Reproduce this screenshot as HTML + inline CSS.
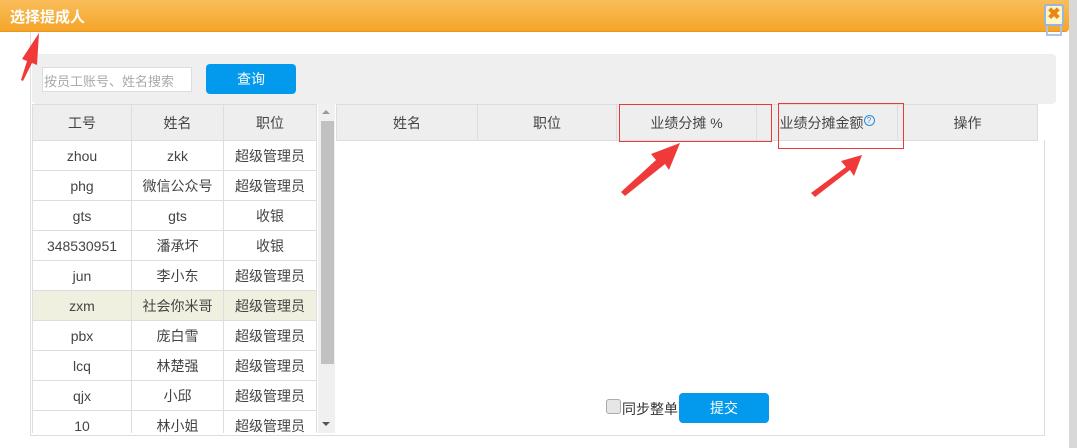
<!DOCTYPE html>
<html><head><meta charset="utf-8"><style>
*{margin:0;padding:0;box-sizing:border-box}
html,body{width:1077px;height:448px;overflow:hidden}
body{background:#fff;position:relative;font-family:"Liberation Sans","Noto Sans CJK SC",sans-serif;font-size:14px;color:#333}
.a{position:absolute}
.hd{left:0;top:0;width:1069px;height:32px;background:linear-gradient(#f9bd5a,#f5a52a);border-bottom:1px solid #e8961c;border-radius:0 0 4px 0}
.hd span{position:absolute;left:10px;top:6px;color:#fff;font-weight:bold;font-size:15px}
table{border-collapse:collapse;position:absolute}
td,th{border:1px solid #ddd;text-align:center;font-weight:normal;font-size:14px;color:#444}
th{background:#eee;height:36px}
td{height:30px}
</style></head><body>
<div class="a hd"><span>选择提成人</span></div>
<div class="a" style="left:1044px;top:4px;width:20px;height:22px;border:2px solid #9ab4e0;border-radius:3px;background:#fff6c8;color:#e8861a;font-weight:bold;font-size:16px;text-align:center;line-height:18px">✖</div>
<div class="a" style="left:1046px;top:26px;width:16px;height:10px;border:2px solid #a9c4f0;border-top:none"></div>
<div class="a" style="left:1069px;top:0;width:8px;height:448px;background:#d8d8d8"></div>
<div class="a" style="left:30px;top:32px;width:1px;height:404px;background:#ddd"></div>
<div class="a" style="left:30px;top:435px;width:1015px;height:1px;background:#ddd"></div>
<div class="a" style="left:1044px;top:140px;width:1px;height:296px;background:#ddd"></div>
<div class="a" style="left:32px;top:54px;width:1024px;height:50px;background:#efefef;border-radius:4px"></div>
<div class="a" style="left:42px;top:67px;width:150px;height:25px;background:#fff;border:1px solid #ddd;color:#aaa;font-size:13px;padding:3px 1px">按员工账号、姓名搜索</div>
<div class="a" style="left:206px;top:64px;width:90px;height:30px;background:#0399ec;border-radius:4px;color:#fff;text-align:center;line-height:30px">查询</div>
<div class="a" style="left:32px;top:104px;width:286px;height:329px;overflow:hidden">
<table style="left:0;top:0;width:285px">
<tr><th style="width:99px">工号</th><th style="width:92px">姓名</th><th>职位</th></tr>
<tr><td>zhou</td><td>zkk</td><td>超级管理员</td></tr>
<tr><td>phg</td><td>微信公众号</td><td>超级管理员</td></tr>
<tr><td>gts</td><td>gts</td><td>收银</td></tr>
<tr><td>348530951</td><td>潘承坏</td><td>收银</td></tr>
<tr><td>jun</td><td>李小东</td><td>超级管理员</td></tr>
<tr style="background:#eff0e0"><td>zxm</td><td>社会你米哥</td><td>超级管理员</td></tr>
<tr><td>pbx</td><td>庞白雪</td><td>超级管理员</td></tr>
<tr><td>lcq</td><td>林楚强</td><td>超级管理员</td></tr>
<tr><td>qjx</td><td>小邱</td><td>超级管理员</td></tr>
<tr><td>10</td><td>林小姐</td><td>超级管理员</td></tr>
</table></div>
<div class="a" style="left:318px;top:104px;width:17px;height:329px;background:#f0f0f0"></div>
<div class="a" style="left:321px;top:121px;width:13px;height:243px;background:#c1c1c1"></div>
<div class="a" style="left:322px;top:110px;width:0;height:0;border:4px solid transparent;border-bottom-color:#999;border-top:none"></div>
<div class="a" style="left:322px;top:422px;width:0;height:0;border:4px solid transparent;border-top-color:#555;border-bottom:none"></div>
<table style="left:336px;top:104px;width:702px">
<tr><th style="width:141px">姓名</th><th style="width:139px">职位</th><th style="width:140px">业绩分摊 %</th><th style="width:141px">业绩分摊金额<span style="display:inline-block;width:11px;height:11px;border:1px solid #2a8be0;border-radius:50%;font-size:8px;line-height:9px;color:#2a8be0;vertical-align:top;margin-top:2px">?</span></th><th>操作</th></tr>
</table>
<div class="a" style="left:619px;top:104px;width:153px;height:38px;border:1px solid #e83a3a"></div>
<div class="a" style="left:778px;top:103px;width:126px;height:46px;border:1px solid #e83a3a"></div>
<svg class="a" style="left:0;top:0" width="1077" height="448">
<g fill="#f03a3a">
<polygon points="21,80 27,61 22,59 39,33 37,65 32,63 23,81"/>
<polygon points="621,192 656,160 651,154 680,143 669,170 665,164 625,196"/>
<polygon points="811,193 846,167 841,161 862,155 854,176 850,170 815,197"/>
</g></svg>
<div class="a" style="left:606px;top:399px;width:15px;height:15px;border:1px solid #aaa;border-radius:3px;background:#e6e6e6"></div>
<div class="a" style="left:622px;top:399px;font-size:14px">同步整单</div>
<div class="a" style="left:679px;top:393px;width:90px;height:30px;background:#0399ec;border-radius:4px;color:#fff;text-align:center;line-height:30px">提交</div>
</body></html>
